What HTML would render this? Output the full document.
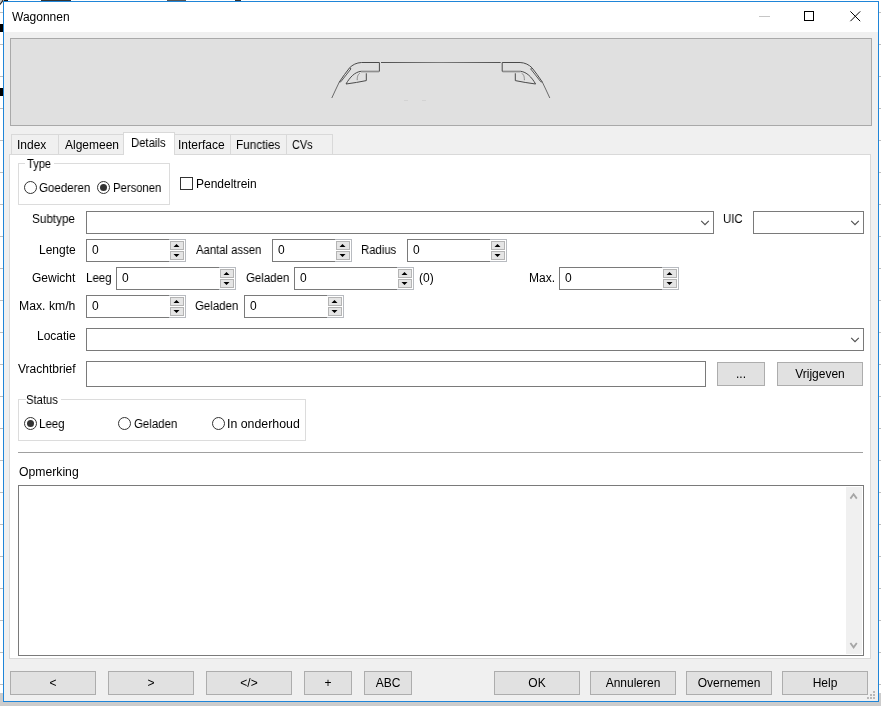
<!DOCTYPE html>
<html><head><meta charset="utf-8"><style>
html,body{margin:0;padding:0;}
body{width:881px;height:706px;position:relative;overflow:hidden;background:#ffffff;font-family:"Liberation Sans",sans-serif;font-size:12px;color:#000;}
.b{position:absolute;box-sizing:border-box;}
.t{position:absolute;white-space:nowrap;line-height:12px;transform-origin:0 0;will-change:transform;}
.bt{position:absolute;text-align:center;white-space:nowrap;will-change:transform;}
svg.b{overflow:visible;}
</style></head><body>
<div class="b" style="left:0px;top:702px;width:881px;height:4px;background:#cccccc;"></div>
<div class="b" style="left:879px;top:693px;width:2px;height:13px;background:#cccccc;"></div>
<div class="b" style="left:0px;top:693px;width:3px;height:13px;background:#cccccc;"></div>
<div class="b" style="left:0px;top:12px;width:3px;height:1px;background:#bfbfbf;"></div>
<div class="b" style="left:879px;top:12px;width:2px;height:1px;background:#bfbfbf;"></div>
<div class="b" style="left:0px;top:44px;width:3px;height:1px;background:#bfbfbf;"></div>
<div class="b" style="left:879px;top:44px;width:2px;height:1px;background:#bfbfbf;"></div>
<div class="b" style="left:0px;top:76px;width:3px;height:1px;background:#bfbfbf;"></div>
<div class="b" style="left:879px;top:76px;width:2px;height:1px;background:#bfbfbf;"></div>
<div class="b" style="left:0px;top:108px;width:3px;height:1px;background:#bfbfbf;"></div>
<div class="b" style="left:879px;top:108px;width:2px;height:1px;background:#bfbfbf;"></div>
<div class="b" style="left:0px;top:140px;width:3px;height:1px;background:#bfbfbf;"></div>
<div class="b" style="left:879px;top:140px;width:2px;height:1px;background:#bfbfbf;"></div>
<div class="b" style="left:0px;top:172px;width:3px;height:1px;background:#bfbfbf;"></div>
<div class="b" style="left:879px;top:172px;width:2px;height:1px;background:#bfbfbf;"></div>
<div class="b" style="left:0px;top:204px;width:3px;height:1px;background:#bfbfbf;"></div>
<div class="b" style="left:879px;top:204px;width:2px;height:1px;background:#bfbfbf;"></div>
<div class="b" style="left:0px;top:236px;width:3px;height:1px;background:#bfbfbf;"></div>
<div class="b" style="left:879px;top:236px;width:2px;height:1px;background:#bfbfbf;"></div>
<div class="b" style="left:0px;top:268px;width:3px;height:1px;background:#bfbfbf;"></div>
<div class="b" style="left:879px;top:268px;width:2px;height:1px;background:#bfbfbf;"></div>
<div class="b" style="left:0px;top:300px;width:3px;height:1px;background:#bfbfbf;"></div>
<div class="b" style="left:879px;top:300px;width:2px;height:1px;background:#bfbfbf;"></div>
<div class="b" style="left:0px;top:332px;width:3px;height:1px;background:#bfbfbf;"></div>
<div class="b" style="left:879px;top:332px;width:2px;height:1px;background:#bfbfbf;"></div>
<div class="b" style="left:0px;top:364px;width:3px;height:1px;background:#bfbfbf;"></div>
<div class="b" style="left:879px;top:364px;width:2px;height:1px;background:#bfbfbf;"></div>
<div class="b" style="left:0px;top:396px;width:3px;height:1px;background:#bfbfbf;"></div>
<div class="b" style="left:879px;top:396px;width:2px;height:1px;background:#bfbfbf;"></div>
<div class="b" style="left:0px;top:428px;width:3px;height:1px;background:#bfbfbf;"></div>
<div class="b" style="left:879px;top:428px;width:2px;height:1px;background:#bfbfbf;"></div>
<div class="b" style="left:0px;top:460px;width:3px;height:1px;background:#bfbfbf;"></div>
<div class="b" style="left:879px;top:460px;width:2px;height:1px;background:#bfbfbf;"></div>
<div class="b" style="left:0px;top:492px;width:3px;height:1px;background:#bfbfbf;"></div>
<div class="b" style="left:879px;top:492px;width:2px;height:1px;background:#bfbfbf;"></div>
<div class="b" style="left:0px;top:524px;width:3px;height:1px;background:#bfbfbf;"></div>
<div class="b" style="left:879px;top:524px;width:2px;height:1px;background:#bfbfbf;"></div>
<div class="b" style="left:0px;top:556px;width:3px;height:1px;background:#bfbfbf;"></div>
<div class="b" style="left:879px;top:556px;width:2px;height:1px;background:#bfbfbf;"></div>
<div class="b" style="left:0px;top:588px;width:3px;height:1px;background:#bfbfbf;"></div>
<div class="b" style="left:879px;top:588px;width:2px;height:1px;background:#bfbfbf;"></div>
<div class="b" style="left:0px;top:620px;width:3px;height:1px;background:#bfbfbf;"></div>
<div class="b" style="left:879px;top:620px;width:2px;height:1px;background:#bfbfbf;"></div>
<div class="b" style="left:0px;top:652px;width:3px;height:1px;background:#bfbfbf;"></div>
<div class="b" style="left:879px;top:652px;width:2px;height:1px;background:#bfbfbf;"></div>
<div class="b" style="left:0px;top:684px;width:3px;height:1px;background:#bfbfbf;"></div>
<div class="b" style="left:879px;top:684px;width:2px;height:1px;background:#bfbfbf;"></div>
<div class="b" style="left:0px;top:24px;width:3px;height:8px;background:#000;"></div>
<svg class="b" style="left:0;top:0" width="8" height="10"><circle cx="-9" cy="-5" r="13" fill="#c8c8c8" stroke="#2a2a2a" stroke-width="1.2"/></svg>
<div class="b" style="left:4px;top:0px;width:4px;height:1px;background:#111;"></div>
<div class="b" style="left:41px;top:0px;width:30px;height:1px;background:#333;"></div>
<div class="b" style="left:167px;top:0px;width:19px;height:1px;background:#555;"></div>
<div class="b" style="left:235px;top:0px;width:6px;height:1px;background:#333;"></div>
<div class="b" style="left:0px;top:88px;width:3px;height:8px;background:#000;"></div>
<div class="b" style="left:3px;top:1px;width:876px;height:701px;background:#f0f0f0;border:1px solid #1f85d8;"></div>
<div class="b" style="left:4px;top:2px;width:874px;height:30px;background:#ffffff;"></div>
<div class="b" style="left:759px;top:16px;width:11px;height:1px;background:#c6c6c6;"></div>
<div class="b" style="left:804px;top:11px;width:10px;height:10px;border:1px solid #000;"></div>
<svg class="b" style="left:850px;top:11px" width="11" height="11"><path d="M0.4 0.4 L10.2 10.2 M10.2 0.4 L0.4 10.2" stroke="#000" stroke-width="1"/></svg>
<div class="b" style="left:10px;top:38px;width:862px;height:88px;background:#e0e0e0;border:1px solid #a9a9a9;"></div>
<svg class="b" style="left:320px;top:50px" width="250" height="60" viewBox="320 50 250 60">
<g id="half" fill="none" stroke="#4a4a4a" stroke-width="1" stroke-linejoin="round">
<path d="M339.3 82 L344.5 74.5 L349.6 67.8 C352.5 64.8 356.5 62.7 361.5 62.5 L379.4 62.5 L379.4 71.3 L361 71.3 C355 72 350 77 346 84 C353 83 360 82 366.3 80.6 L366.3 73.3"/>
<path d="M331.8 98 L335.5 90 L339.3 82" stroke="#6a6a6a"/>
<path d="M361 71.8 L379 71.8" stroke="#9a9a9a" stroke-width="1.2"/>
<path d="M339.3 82 L340.8 81.8 L351 68.8 L349.6 67.8" stroke="#5a5a5a"/>
<path d="M360 73.2 C358.2 74.2 357.2 75.8 357.2 80.2" stroke="#8a8a8a"/>
</g>
<use href="#half" transform="translate(881.6 0) scale(-1 1)"/>
<defs><linearGradient id="tl" x1="381" y1="0" x2="500.7" y2="0" gradientUnits="userSpaceOnUse"><stop offset="0" stop-color="#505050"/><stop offset="0.5" stop-color="#7a7a7a"/><stop offset="1" stop-color="#505050"/></linearGradient></defs><rect x="381" y="62" width="119.7" height="1" fill="url(#tl)"/>
</svg>
<div class="b" style="left:404px;top:100px;width:4px;height:1px;background:#d3d3d3;"></div>
<div class="b" style="left:422px;top:100px;width:4px;height:1px;background:#d3d3d3;"></div>
<div class="b" style="left:9px;top:154px;width:862px;height:505px;background:#ffffff;border:1px solid #d9d9d9;"></div>
<div class="b" style="left:11px;top:134px;width:48px;height:21px;background:#f0f0f0;border:1px solid #d9d9d9;"></div>
<div class="b" style="left:58px;top:134px;width:66px;height:21px;background:#f0f0f0;border:1px solid #d9d9d9;"></div>
<div class="b" style="left:174px;top:134px;width:57px;height:21px;background:#f0f0f0;border:1px solid #d9d9d9;"></div>
<div class="b" style="left:230px;top:134px;width:57px;height:21px;background:#f0f0f0;border:1px solid #d9d9d9;"></div>
<div class="b" style="left:286px;top:134px;width:47px;height:21px;background:#f0f0f0;border:1px solid #d9d9d9;"></div>
<div class="b" style="left:123px;top:132px;width:52px;height:23px;background:#ffffff;border:1px solid #d9d9d9;border-bottom:none;"></div>
<div class="b" style="left:18px;top:163px;width:152px;height:42px;border:1px solid #dcdcdc;"></div>
<div class="b" style="left:25px;top:158px;width:29px;height:11px;background:#fff;"></div>
<svg class="b" style="left:23px;top:180px" width="15" height="15"><circle cx="7.5" cy="7.5" r="6" fill="#fff" stroke="#333" stroke-width="1"/></svg>
<svg class="b" style="left:96px;top:180px" width="15" height="15"><circle cx="7.5" cy="7.5" r="6" fill="#fff" stroke="#333" stroke-width="1"/><circle cx="7.5" cy="7.5" r="3.5" fill="#333"/></svg>
<div class="b" style="left:180px;top:177px;width:13px;height:13px;background:#fff;border:1px solid #333;"></div>
<div class="b" style="left:86px;top:211px;width:628px;height:23px;background:#fff;border:1px solid #7a7a7a;"></div>
<svg class="b" style="left:699px;top:218px" width="12" height="8"><path d="M2.2 2.8 L6 6.6 L9.8 2.8" fill="none" stroke="#505050" stroke-width="1.15"/></svg>
<div class="b" style="left:753px;top:211px;width:111px;height:23px;background:#fff;border:1px solid #7a7a7a;"></div>
<svg class="b" style="left:849px;top:218px" width="12" height="8"><path d="M2.2 2.8 L6 6.6 L9.8 2.8" fill="none" stroke="#505050" stroke-width="1.15"/></svg>
<div class="b" style="left:86px;top:239px;width:100px;height:23px;background:#fff;border:1px solid #7a7a7a;"></div>
<div class="b" style="left:169px;top:239px;width:17px;height:23px;background:#fff;border:1px solid #b8bbc0;border-left:none;"></div>
<div class="b" style="left:170px;top:241px;width:14px;height:9px;background:#e5e5e5;border:1px solid #b4b4b4;"></div>
<div class="b" style="left:170px;top:251px;width:14px;height:9px;background:#e5e5e5;border:1px solid #b4b4b4;"></div>
<svg class="b" style="left:169px;top:239px" width="17" height="23"><path d="M4.5 8.0 L7.5 5.0 L10.5 8.0Z M4.5 15.0 L7.5 18.0 L10.5 15.0Z" fill="#000"/></svg>
<div class="b" style="left:272px;top:239px;width:80px;height:23px;background:#fff;border:1px solid #7a7a7a;"></div>
<div class="b" style="left:335px;top:239px;width:17px;height:23px;background:#fff;border:1px solid #b8bbc0;border-left:none;"></div>
<div class="b" style="left:336px;top:241px;width:14px;height:9px;background:#e5e5e5;border:1px solid #b4b4b4;"></div>
<div class="b" style="left:336px;top:251px;width:14px;height:9px;background:#e5e5e5;border:1px solid #b4b4b4;"></div>
<svg class="b" style="left:335px;top:239px" width="17" height="23"><path d="M4.5 8.0 L7.5 5.0 L10.5 8.0Z M4.5 15.0 L7.5 18.0 L10.5 15.0Z" fill="#000"/></svg>
<div class="b" style="left:407px;top:239px;width:100px;height:23px;background:#fff;border:1px solid #7a7a7a;"></div>
<div class="b" style="left:490px;top:239px;width:17px;height:23px;background:#fff;border:1px solid #b8bbc0;border-left:none;"></div>
<div class="b" style="left:491px;top:241px;width:14px;height:9px;background:#e5e5e5;border:1px solid #b4b4b4;"></div>
<div class="b" style="left:491px;top:251px;width:14px;height:9px;background:#e5e5e5;border:1px solid #b4b4b4;"></div>
<svg class="b" style="left:490px;top:239px" width="17" height="23"><path d="M4.5 8.0 L7.5 5.0 L10.5 8.0Z M4.5 15.0 L7.5 18.0 L10.5 15.0Z" fill="#000"/></svg>
<div class="b" style="left:116px;top:267px;width:120px;height:23px;background:#fff;border:1px solid #7a7a7a;"></div>
<div class="b" style="left:219px;top:267px;width:17px;height:23px;background:#fff;border:1px solid #b8bbc0;border-left:none;"></div>
<div class="b" style="left:220px;top:269px;width:14px;height:9px;background:#e5e5e5;border:1px solid #b4b4b4;"></div>
<div class="b" style="left:220px;top:279px;width:14px;height:9px;background:#e5e5e5;border:1px solid #b4b4b4;"></div>
<svg class="b" style="left:219px;top:267px" width="17" height="23"><path d="M4.5 8.0 L7.5 5.0 L10.5 8.0Z M4.5 15.0 L7.5 18.0 L10.5 15.0Z" fill="#000"/></svg>
<div class="b" style="left:294px;top:267px;width:120px;height:23px;background:#fff;border:1px solid #7a7a7a;"></div>
<div class="b" style="left:397px;top:267px;width:17px;height:23px;background:#fff;border:1px solid #b8bbc0;border-left:none;"></div>
<div class="b" style="left:398px;top:269px;width:14px;height:9px;background:#e5e5e5;border:1px solid #b4b4b4;"></div>
<div class="b" style="left:398px;top:279px;width:14px;height:9px;background:#e5e5e5;border:1px solid #b4b4b4;"></div>
<svg class="b" style="left:397px;top:267px" width="17" height="23"><path d="M4.5 8.0 L7.5 5.0 L10.5 8.0Z M4.5 15.0 L7.5 18.0 L10.5 15.0Z" fill="#000"/></svg>
<div class="b" style="left:559px;top:267px;width:120px;height:23px;background:#fff;border:1px solid #7a7a7a;"></div>
<div class="b" style="left:662px;top:267px;width:17px;height:23px;background:#fff;border:1px solid #b8bbc0;border-left:none;"></div>
<div class="b" style="left:663px;top:269px;width:14px;height:9px;background:#e5e5e5;border:1px solid #b4b4b4;"></div>
<div class="b" style="left:663px;top:279px;width:14px;height:9px;background:#e5e5e5;border:1px solid #b4b4b4;"></div>
<svg class="b" style="left:662px;top:267px" width="17" height="23"><path d="M4.5 8.0 L7.5 5.0 L10.5 8.0Z M4.5 15.0 L7.5 18.0 L10.5 15.0Z" fill="#000"/></svg>
<div class="b" style="left:86px;top:295px;width:100px;height:23px;background:#fff;border:1px solid #7a7a7a;"></div>
<div class="b" style="left:169px;top:295px;width:17px;height:23px;background:#fff;border:1px solid #b8bbc0;border-left:none;"></div>
<div class="b" style="left:170px;top:297px;width:14px;height:9px;background:#e5e5e5;border:1px solid #b4b4b4;"></div>
<div class="b" style="left:170px;top:307px;width:14px;height:9px;background:#e5e5e5;border:1px solid #b4b4b4;"></div>
<svg class="b" style="left:169px;top:295px" width="17" height="23"><path d="M4.5 8.0 L7.5 5.0 L10.5 8.0Z M4.5 15.0 L7.5 18.0 L10.5 15.0Z" fill="#000"/></svg>
<div class="b" style="left:244px;top:295px;width:100px;height:23px;background:#fff;border:1px solid #7a7a7a;"></div>
<div class="b" style="left:327px;top:295px;width:17px;height:23px;background:#fff;border:1px solid #b8bbc0;border-left:none;"></div>
<div class="b" style="left:328px;top:297px;width:14px;height:9px;background:#e5e5e5;border:1px solid #b4b4b4;"></div>
<div class="b" style="left:328px;top:307px;width:14px;height:9px;background:#e5e5e5;border:1px solid #b4b4b4;"></div>
<svg class="b" style="left:327px;top:295px" width="17" height="23"><path d="M4.5 8.0 L7.5 5.0 L10.5 8.0Z M4.5 15.0 L7.5 18.0 L10.5 15.0Z" fill="#000"/></svg>
<div class="b" style="left:86px;top:328px;width:778px;height:23px;background:#fff;border:1px solid #7a7a7a;"></div>
<svg class="b" style="left:849px;top:335px" width="12" height="8"><path d="M2.2 2.8 L6 6.6 L9.8 2.8" fill="none" stroke="#505050" stroke-width="1.15"/></svg>
<div class="b" style="left:86px;top:361px;width:620px;height:26px;background:#fff;border:1px solid #7a7a7a;"></div>
<div class="b" style="left:717px;top:362px;width:48px;height:24px;background:#e1e1e1;border:1px solid #adadad;"></div>
<div class="bt" style="left:717px;top:362px;width:48px;height:24px;line-height:24px">...</div>
<div class="b" style="left:777px;top:362px;width:86px;height:24px;background:#e1e1e1;border:1px solid #adadad;"></div>
<div class="bt" style="left:777px;top:362px;width:86px;height:24px;line-height:24px">Vrijgeven</div>
<div class="b" style="left:18px;top:399px;width:288px;height:42px;border:1px solid #dcdcdc;"></div>
<div class="b" style="left:26px;top:394px;width:35px;height:11px;background:#fff;"></div>
<svg class="b" style="left:23px;top:416px" width="15" height="15"><circle cx="7.5" cy="7.5" r="6" fill="#fff" stroke="#333" stroke-width="1"/><circle cx="7.5" cy="7.5" r="3.5" fill="#333"/></svg>
<svg class="b" style="left:117px;top:416px" width="15" height="15"><circle cx="7.5" cy="7.5" r="6" fill="#fff" stroke="#333" stroke-width="1"/></svg>
<svg class="b" style="left:211px;top:416px" width="15" height="15"><circle cx="7.5" cy="7.5" r="6" fill="#fff" stroke="#333" stroke-width="1"/></svg>
<div class="b" style="left:18px;top:452px;width:845px;height:1px;background:#a0a0a0;"></div>
<div class="b" style="left:18px;top:485px;width:846px;height:171px;background:#fff;border:1px solid #7a7a7a;"></div>
<div class="b" style="left:846px;top:487px;width:16px;height:167px;background:#f0f0f0;"></div>
<svg class="b" style="left:846px;top:487px" width="16" height="167"><path d="M4.4 11.6 L7.6 7.2 L10.8 11.6" fill="none" stroke="#a6a6a6" stroke-width="1.8"/><path d="M4.4 156 L7.6 160.4 L10.8 156" fill="none" stroke="#a6a6a6" stroke-width="1.8"/></svg>
<div class="b" style="left:10px;top:671px;width:86px;height:24px;background:#e1e1e1;border:1px solid #adadad;"></div>
<div class="bt" style="left:10px;top:671px;width:86px;height:24px;line-height:24px">&lt;</div>
<div class="b" style="left:108px;top:671px;width:86px;height:24px;background:#e1e1e1;border:1px solid #adadad;"></div>
<div class="bt" style="left:108px;top:671px;width:86px;height:24px;line-height:24px">&gt;</div>
<div class="b" style="left:206px;top:671px;width:86px;height:24px;background:#e1e1e1;border:1px solid #adadad;"></div>
<div class="bt" style="left:206px;top:671px;width:86px;height:24px;line-height:24px">&lt;/&gt;</div>
<div class="b" style="left:304px;top:671px;width:48px;height:24px;background:#e1e1e1;border:1px solid #adadad;"></div>
<div class="bt" style="left:304px;top:671px;width:48px;height:24px;line-height:24px">+</div>
<div class="b" style="left:364px;top:671px;width:48px;height:24px;background:#e1e1e1;border:1px solid #adadad;"></div>
<div class="bt" style="left:364px;top:671px;width:48px;height:24px;line-height:24px">ABC</div>
<div class="b" style="left:494px;top:671px;width:86px;height:24px;background:#e1e1e1;border:1px solid #adadad;"></div>
<div class="bt" style="left:494px;top:671px;width:86px;height:24px;line-height:24px">OK</div>
<div class="b" style="left:590px;top:671px;width:86px;height:24px;background:#e1e1e1;border:1px solid #adadad;"></div>
<div class="bt" style="left:590px;top:671px;width:86px;height:24px;line-height:24px">Annuleren</div>
<div class="b" style="left:686px;top:671px;width:86px;height:24px;background:#e1e1e1;border:1px solid #adadad;"></div>
<div class="bt" style="left:686px;top:671px;width:86px;height:24px;line-height:24px">Overnemen</div>
<div class="b" style="left:782px;top:671px;width:86px;height:24px;background:#e1e1e1;border:1px solid #adadad;"></div>
<div class="bt" style="left:782px;top:671px;width:86px;height:24px;line-height:24px">Help</div>
<div class="b" style="left:873px;top:691px;width:2px;height:2px;background:#b8b8b8;"></div>
<div class="b" style="left:870px;top:694px;width:2px;height:2px;background:#b8b8b8;"></div>
<div class="b" style="left:873px;top:694px;width:2px;height:2px;background:#b8b8b8;"></div>
<div class="b" style="left:867px;top:697px;width:2px;height:2px;background:#b8b8b8;"></div>
<div class="b" style="left:870px;top:697px;width:2px;height:2px;background:#b8b8b8;"></div>
<div class="b" style="left:873px;top:697px;width:2px;height:2px;background:#b8b8b8;"></div>
<div class="t" style="left:12px;top:11px;">Wagonnen</div>
<div class="t" style="left:17px;top:139px;">Index</div>
<div class="t" style="left:65px;top:139px;">Algemeen</div>
<div class="t" style="left:178px;top:139px;">Interface</div>
<div class="t" style="left:236px;top:139px;transform:scaleX(0.9773);">Functies</div>
<div class="t" style="left:292px;top:139px;transform:scaleX(0.9048);">CVs</div>
<div class="t" style="left:131px;top:137px;transform:scaleX(0.9429);">Details</div>
<div class="t" style="left:27px;top:158px;transform:scaleX(0.9231);">Type</div>
<div class="t" style="left:39px;top:182px;transform:scaleX(0.9615);">Goederen</div>
<div class="t" style="left:113px;top:182px;transform:scaleX(0.9400);">Personen</div>
<div class="t" style="left:196px;top:178px;">Pendeltrein</div>
<div class="t" style="left:32px;top:213px;transform:scaleX(0.9767);">Subtype</div>
<div class="t" style="left:723px;top:213px;transform:scaleX(0.9474);">UIC</div>
<div class="t" style="left:39px;top:244px;">Lengte</div>
<div class="t" style="left:92px;top:244px;">0</div>
<div class="t" style="left:196px;top:244px;transform:scaleX(0.9420);">Aantal assen</div>
<div class="t" style="left:278px;top:244px;">0</div>
<div class="t" style="left:361px;top:244px;transform:scaleX(0.9444);">Radius</div>
<div class="t" style="left:413px;top:244px;">0</div>
<div class="t" style="left:32px;top:272px;">Gewicht</div>
<div class="t" style="left:86px;top:272px;transform:scaleX(0.9600);">Leeg</div>
<div class="t" style="left:122px;top:272px;">0</div>
<div class="t" style="left:246px;top:272px;transform:scaleX(0.9545);">Geladen</div>
<div class="t" style="left:300px;top:272px;">0</div>
<div class="t" style="left:419px;top:272px;">(0)</div>
<div class="t" style="left:529px;top:272px;">Max.</div>
<div class="t" style="left:565px;top:272px;">0</div>
<div class="t" style="left:19px;top:300px;transform:scaleX(1.0185);">Max. km/h</div>
<div class="t" style="left:92px;top:300px;">0</div>
<div class="t" style="left:195px;top:300px;transform:scaleX(0.9545);">Geladen</div>
<div class="t" style="left:250px;top:300px;">0</div>
<div class="t" style="left:37px;top:330px;">Locatie</div>
<div class="t" style="left:18px;top:363px;">Vrachtbrief</div>
<div class="t" style="left:26px;top:394px;transform:scaleX(0.9394);">Status</div>
<div class="t" style="left:39px;top:418px;transform:scaleX(0.9600);">Leeg</div>
<div class="t" style="left:134px;top:418px;transform:scaleX(0.9545);">Geladen</div>
<div class="t" style="left:227px;top:418px;transform:scaleX(1.0290);">In onderhoud</div>
<div class="t" style="left:19px;top:466px;transform:scaleX(1.0172);">Opmerking</div>
</body></html>
